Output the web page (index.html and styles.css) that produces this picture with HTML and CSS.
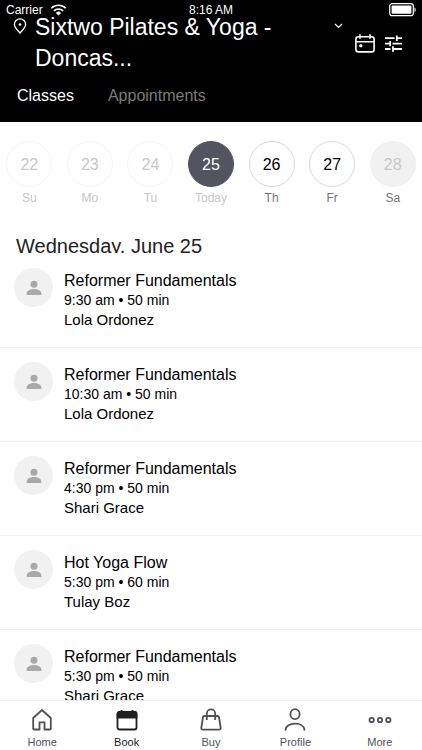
FILE: index.html
```html
<!DOCTYPE html>
<html lang="en">

<head>
    <meta charset="utf-8" />
    <meta name="viewport" content="width=device-width, initial-scale=1">
    <title>Book a class</title>
    <link rel="stylesheet" href="styles.css">
</head>

<body>
    <svg class="sprite" aria-hidden="true">
        <symbol id="person" viewBox="0 0 16 16">
            <circle cx="8" cy="4.3" r="3.5" />
            <path d="M.7 15v-1.6C.7 10.6 4.2 9 8 9s7.3 1.6 7.3 4.4V15z" />
        </symbol>
    </svg>

    <header class="header">
        <div class="status">
            <div class="status-left">
                <span>Carrier</span>
                <svg class="wifi" width="17" height="12" viewBox="0 0 16 12">
                    <path d="M.8 4.2a10.2 10.2 0 0 1 14.4 0M3.4 6.9a6.5 6.5 0 0 1 9.2 0" fill="none" stroke="#fff" stroke-width="1.6" />
                    <path d="M5.4 8.9a3.7 3.7 0 0 1 5.2 0L8 11.6z" fill="#fff" />
                </svg>
            </div>
            <span>8:16 AM</span>
            <div class="status-right">
                <svg width="27" height="14" viewBox="0 0 27 14">
                    <rect x=".7" y=".7" width="23.6" height="12" rx="2.5" fill="none" stroke="#fff" stroke-width="1.2" />
                    <rect x="2.6" y="2.6" width="19.8" height="8.2" rx="1" fill="#fff" />
                    <path d="M25.5 4.2c1.6.8 1.6 4.2 0 5z" fill="#fff" />
                </svg>
            </div>
        </div>

        <div class="bar">
            <button class="location">
                <svg class="pin" width="14" height="16" viewBox="0 0 14 16">
                    <path d="M7 15C4.5 12.2 1.4 9.3 1.4 6.4a5.6 5.6 0 0 1 11.2 0C12.6 9.3 9.5 12.2 7 15z" fill="none" stroke="#fff" stroke-width="1.3" />
                    <circle cx="7" cy="6.5" r="1.3" fill="#fff" />
                </svg>
                <span class="location-name">Sixtwo Pilates &amp; Yoga - Doncas...</span>
                <svg class="chevron" width="9" height="6" viewBox="0 0 9 6">
                    <path d="M1 1l3.5 3.5L8 1" fill="none" stroke="#fff" stroke-width="1.2" />
                </svg>
            </button>
            <div class="actions">
                <button aria-label="Calendar">
                    <svg width="20" height="19" viewBox="0 0 20 19">
                        <rect x=".9" y="2.7" width="18.2" height="15.2" rx="2.5" fill="none" stroke="#fff" stroke-width="1.6" />
                        <path d="M1 7.8h18M5 .3v4.5M15 .3v4.5" stroke="#fff" stroke-width="1.6" />
                        <rect x="4.3" y="10.3" width="3" height="3" rx="1" fill="#fff" />
                    </svg>
                </button>
                <button aria-label="Filters">
                    <svg width="17" height="17" viewBox="0 0 17 17">
                        <path d="M0 3.2h9.5M12 3.2h5M11.8.5v5.4M0 8.6h5M7.500 8.6H17M5.200 5.900v5.400M0 14h5.500M8 14h9M8 11.300v5.400" fill="none" stroke="#fff" stroke-width="1.800" />
                    </svg>
                </button>
            </div>
        </div>

        <nav class="tabs">
            <a href="#classes" class="tab active">Classes</a>
            <a href="#appointments" class="tab">Appointments</a>
        </nav>
    </header>

    <main class="content" id="classes">
        <div class="week">
            <button class="day past"><span class="num">22</span><span class="name">Su</span></button>
            <button class="day past"><span class="num">23</span><span class="name">Mo</span></button>
            <button class="day past"><span class="num">24</span><span class="name">Tu</span></button>
            <button class="day today"><span class="num">25</span><span class="name">Today</span></button>
            <button class="day"><span class="num">26</span><span class="name">Th</span></button>
            <button class="day"><span class="num">27</span><span class="name">Fr</span></button>
            <button class="day closed"><span class="num">28</span><span class="name">Sa</span></button>
        </div>

        <h1 class="date">Wednesday, June 25</h1>

        <ul class="classes">
            <li class="class">
                <span class="avatar"><svg width="16" height="16"><use href="#person" /></svg></span>
                <div class="info">
                    <h2>Reformer Fundamentals</h2>
                    <p class="time">9:30 am • 50 min</p>
                    <p>Lola Ordonez</p>
                </div>
            </li>
            <li class="class">
                <span class="avatar"><svg width="16" height="16"><use href="#person" /></svg></span>
                <div class="info">
                    <h2>Reformer Fundamentals</h2>
                    <p class="time">10:30 am • 50 min</p>
                    <p>Lola Ordonez</p>
                </div>
            </li>
            <li class="class">
                <span class="avatar"><svg width="16" height="16"><use href="#person" /></svg></span>
                <div class="info">
                    <h2>Reformer Fundamentals</h2>
                    <p class="time">4:30 pm • 50 min</p>
                    <p>Shari Grace</p>
                </div>
            </li>
            <li class="class">
                <span class="avatar"><svg width="16" height="16"><use href="#person" /></svg></span>
                <div class="info">
                    <h2>Hot Yoga Flow</h2>
                    <p class="time">5:30 pm • 60 min</p>
                    <p>Tulay Boz</p>
                </div>
            </li>
            <li class="class">
                <span class="avatar"><svg width="16" height="16"><use href="#person" /></svg></span>
                <div class="info">
                    <h2>Reformer Fundamentals</h2>
                    <p class="time">5:30 pm • 50 min</p>
                    <p>Shari Grace</p>
                </div>
            </li>
        </ul>
    </main>

    <nav class="menu">
        <a href="#home">
            <svg width="24" height="24" viewBox="0 0 24 24">
                <path d="M3.2 10L12 2l8.800 8v10.500a1 1 0 0 1-1 1h-5.300v-7.200h-5v7.200H4.200a1 1 0 0 1-1-1z" />
            </svg>
            Home
        </a>
        <a href="#book" class="active">
            <svg width="24" height="24" viewBox="0 0 24 24">
                <rect x="2.5" y="4" width="19" height="17.5" rx="2" />
                <path d="M2.500 9.500V6a2 2 0 0 1 2-2h15a2 2 0 0 1 2 2v3.500z" fill="currentColor" />
                <path d="M6.500 2V5M17.500 2V5" />
            </svg>
            Book
        </a>
        <a href="#buy">
            <svg width="24" height="24" viewBox="0 0 24 24">
                <path d="M5.500 8h13a1.500 1.500 0 0 1 1.500 1.200L21.700 20a1.500 1.500 0 0 1-1.500 1.700H3.800A1.500 1.500 0 0 1 2.300 20L4 9.200A1.500 1.500 0 0 1 5.500 8z" />
                <path d="M7.800 12V5.500a4.200 4.200 0 0 1 8.400 0V12" />
            </svg>
            Buy
        </a>
        <a href="#profile">
            <svg width="24" height="24" viewBox="0 0 24 24">
                <ellipse cx="12" cy="6.200" rx="4.600" ry="5" />
                <path d="M2.500 22.500c0-4.500 4-6.800 9.500-6.800s9.500 2.300 9.500 6.800" />
            </svg>
            Profile
        </a>
        <a href="#more">
            <svg width="24" height="24" viewBox="0 0 24 24">
                <circle cx="3.700" cy="12" r="2.200" />
                <circle cx="12" cy="12" r="2.200" />
                <circle cx="20.300" cy="12" r="2.200" />
            </svg>
            More
        </a>
    </nav>
</body>

</html>
```

FILE: styles.css
```css
* {
    box-sizing: border-box;
}

body {
    margin: 0;
    height: 100vh;
    display: flex;
    flex-direction: column;
    background: #fff;
    color: #000;
    font-family: "Liberation Sans", Arial, sans-serif;
}

h1,
h2,
p,
ul {
    margin: 0;
    padding: 0;
    font-weight: normal;
}

button {
    padding: 0;
    border: 0;
    background: none;
    color: inherit;
    font: inherit;
    text-align: left;
}

a {
    color: inherit;
    text-decoration: none;
}

svg {
    display: block;
    flex: none;
}

.sprite {
    position: absolute;
    width: 0;
    height: 0;
}

/* Header */
.header {
    flex: none;
    padding-bottom: 16px;
    background: #000;
    color: #fff;
}

/* the title tucks up under the status line */
.status {
    display: grid;
    grid-template-columns: 1fr auto 1fr;
    height: 12px;
    padding: 0 6px;
    font-size: 12px;
    line-height: 20px;
}

.status-left {
    display: flex;
    gap: 7px;
}

.wifi {
    margin-top: 4px;
}

.status-right {
    display: flex;
    justify-content: flex-end;
    padding-top: 3px;
}

.bar {
    display: flex;
    padding: 0 20px 0 13px;
}

.location {
    flex: 1;
    display: flex;
    align-items: flex-start;
    gap: 8px;
    font-size: 23px;
    line-height: 31px;
}

.location-name {
    flex: 1;
}

.pin {
    margin-top: 6px;
}

.chevron {
    margin-top: 11px;
}

.actions {
    display: flex;
    align-items: center;
    gap: 10px;
    margin-left: 12px;
}

.tabs {
    display: flex;
    gap: 34px;
    padding: 12px 17px 0;
    font-size: 16px;
    line-height: 20px;
}

.tab {
    color: #7c7c7c;
}

.tab.active {
    color: #fff;
}

/* Week */
.content {
    flex: 1;
    min-height: 0;
    overflow: auto;
    scrollbar-width: none;
}

.week {
    display: flex;
    margin: 0 -1px;
    padding-top: 19px;
}

.day {
    flex: 1;
    display: flex;
    flex-direction: column;
    align-items: center;
    gap: 4px;
}

.num {
    width: 46px;
    height: 46px;
    border: 1px solid #d9d9d9;
    border-radius: 50%;
    font-size: 16px;
    line-height: 45px;
    text-align: center;
}

.name {
    color: #757575;
    font-size: 12px;
    line-height: 14px;
}

.past .num {
    border-color: #f5f5f5;
    color: #c8c8c8;
}

.past .name,
.today .name {
    color: #c8c8c8;
}

.today .num {
    border-color: #53545f;
    background: #53545f;
    color: #fff;
}

.closed .num {
    border-color: #f1f1f1;
    background: #f1f1f1;
    color: #c8c8c8;
}

.date {
    height: 19px;
    margin: 29px 0 1px;
    padding-left: 16px;
    overflow: hidden;
    color: #222;
    font-size: 20px;
    line-height: 24px;
}

/* Class list */
.classes {
    list-style: none;
}

.class {
    display: flex;
    gap: 11px;
    padding: 14px 14px 18px;
    border-bottom: 1px solid #f1f1f1;
}

.avatar {
    flex: none;
    display: flex;
    align-items: center;
    justify-content: center;
    width: 39px;
    height: 39px;
    border-radius: 50%;
    background: #f1f1f1;
    fill: #a9a9a9;
}

.info {
    padding-top: 2px;
    font-size: 15px;
    line-height: 19px;
}

.info h2 {
    font-size: 16px;
    line-height: 21px;
}

.info .time {
    font-size: 14px;
}

/* Bottom menu */
.menu {
    flex: none;
    display: flex;
    height: 50px;
    padding-top: 7px;
    border-top: 1px solid #f1f1f1;
    background: #fff;
    color: #505059;
    font-size: 11px;
    line-height: 14px;
}

.menu a {
    flex: 1;
    display: flex;
    flex-direction: column;
    align-items: center;
    gap: 3px;
}

.menu svg {
    fill: none;
    stroke: currentColor;
    stroke-width: 1.8;
}

.menu .active {
    color: #202024;
}
```
